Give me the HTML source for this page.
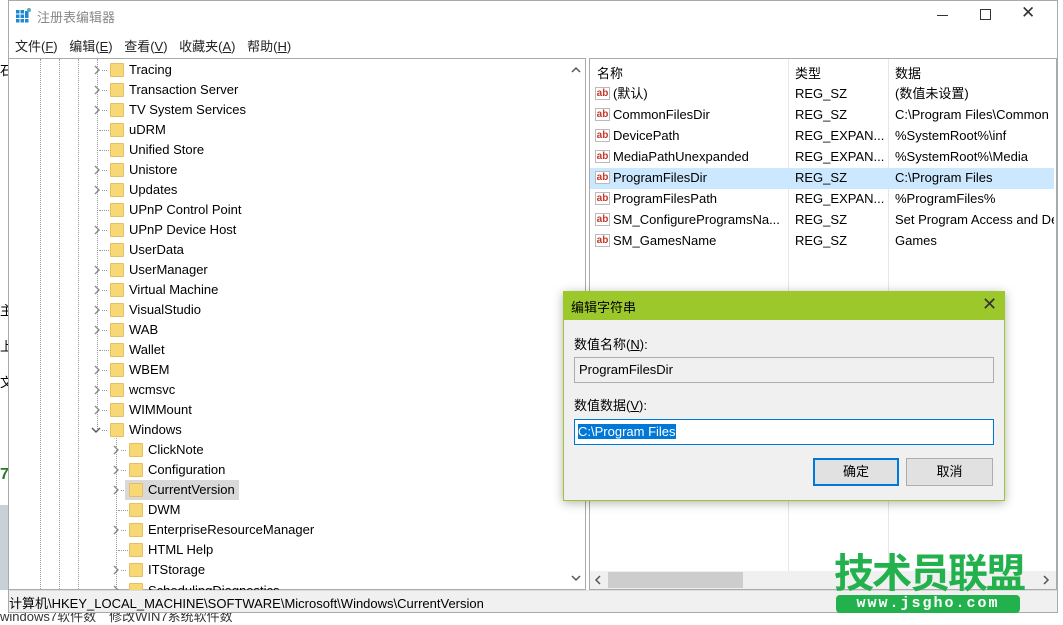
<!DOCTYPE html>
<html><head><meta charset="utf-8"><style>
*{margin:0;padding:0;box-sizing:border-box}
body{width:1063px;height:620px;overflow:hidden;background:#fff;font-family:"Liberation Sans","Noto Sans CJK SC",sans-serif;font-size:13px;color:#000;position:relative}
.abs{position:absolute}
.win{left:8px;top:0;width:1050px;height:613px;background:#fff;border:1px solid #aaa}
.row{position:absolute;height:20px;line-height:20px;white-space:nowrap}
.fold{position:absolute;width:14px;height:14px;background:#f8d775;border:1px solid #e6c060;border-radius:1px;top:3px}
.chev{position:absolute;width:10px;height:10px}
.dl{position:absolute;border-left:1px dotted #999}
.dh{position:absolute;border-top:1px dotted #999;width:8px;top:10px}
.rr{position:absolute;height:21px;line-height:21px;white-space:nowrap;left:590px;width:464px}
.ab{position:absolute;left:5px;top:4px;width:15px;height:13px;border:1px solid #bbb;color:#c0392b;font-size:10px;font-weight:bold;line-height:11px;text-align:center;background:#fff}
</style></head><body>
<div class="abs" style="left:0;top:60px;font-size:13px">石</div>
<div class="abs" style="left:0;top:300px">主</div>
<div class="abs" style="left:0;top:336px">上</div>
<div class="abs" style="left:0;top:372px">文</div>
<div class="abs" style="left:0;top:466px;color:#2a7a2a;font-weight:bold;font-size:16px">7</div>
<div class="abs" style="left:0;top:505px;width:8px;height:85px;background:#c8d0d8"></div>
<div class="abs" style="left:0;top:606px;font-size:13px;color:#333">windows7软件数　修改WIN7系统软件数</div>
<div class="abs win"></div>
<div class="abs" style="left:16px;top:8px;width:14px;height:14px">
<svg width="15" height="15"><g fill="#1e88d0"><rect x="0" y="2" width="3.5" height="3.5"/><rect x="4.5" y="2" width="3.5" height="3.5"/><rect x="9" y="3" width="3.5" height="3.5"/><rect x="0" y="6.5" width="3.5" height="3.5"/><rect x="4.5" y="6.5" width="3.5" height="3.5"/><rect x="9" y="6.5" width="3.5" height="3.5"/><rect x="0" y="11" width="3.5" height="3.5"/><rect x="4.5" y="11" width="3.5" height="3.5"/><rect x="9" y="11" width="3.5" height="3.5"/></g><circle cx="13" cy="2" r="2" fill="#5ab"/></svg></div>
<div class="abs" style="left:37px;top:7px;color:#888;font-size:13px">注册表编辑器</div>
<div class="abs" style="left:937px;top:15px;width:11px;border-top:1px solid #333"></div>
<div class="abs" style="left:980px;top:9px;width:11px;height:11px;border:1px solid #333"></div>
<div class="abs" style="left:1021px;top:3px;font-size:17px;color:#333">✕</div>
<div class="abs" style="left:15px;top:36px;color:#222;word-spacing:8px">文件(<u>F</u>) 编辑(<u>E</u>) 查看(<u>V</u>) 收藏夹(<u>A</u>) 帮助(<u>H</u>)</div>
<div class="abs" style="left:9px;top:58px;width:577px;height:532px;border:1px solid #aaa;border-left:none;overflow:hidden">
<div class="dl" style="left:31px;top:0;height:532px"></div>
<div class="dl" style="left:50px;top:0;height:532px"></div>
<div class="dl" style="left:69px;top:0;height:532px"></div>
<div class="dl" style="left:88px;top:0;height:372px"></div>
<div class="dl" style="left:107px;top:372px;height:160px"></div>
</div>
<div class="abs" style="left:567px;top:59px;width:18px;height:530px;background:#fff"></div>
<svg class="abs" style="left:571px;top:66px" width="10" height="8"><path d="M1 6L5 2L9 6" stroke="#555" stroke-width="1.5" fill="none"/></svg>
<svg class="abs" style="left:571px;top:574px" width="10" height="8"><path d="M1 2L5 6L9 2" stroke="#555" stroke-width="1.5" fill="none"/></svg>
<div id="rows"></div>
<div class="abs" style="left:589px;top:58px;width:468px;height:532px;border:1px solid #aaa"></div>
<div class="abs" style="left:788px;top:59px;height:512px;border-left:1px solid #e6e6e6"></div>
<div class="abs" style="left:888px;top:59px;height:512px;border-left:1px solid #e6e6e6"></div>
<div class="abs" style="left:597px;top:63px">名称</div>
<div class="abs" style="left:795px;top:63px">类型</div>
<div class="abs" style="left:895px;top:63px">数据</div>
<div class="abs" style="left:590px;top:168px;width:464px;height:21px;background:#cce8ff"></div>
<div id="rr"></div>
<div class="abs" style="left:590px;top:571px;width:466px;height:18px;background:#f0f0f0"></div>
<div class="abs" style="left:608px;top:572px;width:135px;height:16px;background:#cdcdcd"></div>
<svg class="abs" style="left:594px;top:575px" width="8" height="10"><path d="M6 1L2 5L6 9" stroke="#555" stroke-width="1.5" fill="none"/></svg>
<svg class="abs" style="left:1042px;top:575px" width="8" height="10"><path d="M2 1L6 5L2 9" stroke="#555" stroke-width="1.5" fill="none"/></svg>
<div class="abs" style="left:9px;top:590px;width:1048px;height:22px;background:#f0f0f0;border-top:1px solid #ddd"></div>
<div class="abs" style="left:9px;top:593px;font-size:13px">计算机\HKEY_LOCAL_MACHINE\SOFTWARE\Microsoft\Windows\CurrentVersion</div>
<div class="abs" style="left:834px;top:548px;font-size:40px;font-weight:bold;color:#22b14c;letter-spacing:-2px;line-height:44px;font-family:'Noto Sans CJK SC',sans-serif">技术员联盟</div>
<div class="abs" style="left:836px;top:595px;width:184px;height:18px;background:#22b14c;border-radius:4px;color:#fff;font-size:15px;font-weight:bold;text-align:center;line-height:18px;letter-spacing:2px;font-family:'Liberation Mono',monospace">www.jsgho.com</div>
<div class="abs" style="left:563px;top:291px;width:442px;height:210px;background:#f0f0f0;border:1px solid #9dc42a;box-shadow:0 2px 10px rgba(0,0,0,.3)"></div>
<div class="abs" style="left:563px;top:291px;width:442px;height:29px;background:#9dc82b"></div>
<div class="abs" style="left:571px;top:297px;font-size:13px">编辑字符串</div>
<div class="abs" style="left:982px;top:294px;font-size:18px;color:#333">✕</div>
<div class="abs" style="left:574px;top:334px">数值名称(<u>N</u>):</div>
<div class="abs" style="left:574px;top:357px;width:420px;height:26px;background:#f0f0f0;border:1px solid #adadad;padding:3px 4px;line-height:18px">ProgramFilesDir</div>
<div class="abs" style="left:574px;top:395px">数值数据(<u>V</u>):</div>
<div class="abs" style="left:574px;top:419px;width:420px;height:26px;background:#fff;border:1px solid #0078d7;padding:3px 3px;line-height:18px"><span style="background:#0078d7;color:#fff">C:\Program Files</span></div>
<div class="abs" style="left:813px;top:458px;width:86px;height:28px;background:#e1e1e1;border:2px solid #0078d7;text-align:center;line-height:24px">确定</div>
<div class="abs" style="left:906px;top:458px;width:87px;height:28px;background:#e1e1e1;border:1px solid #adadad;text-align:center;line-height:26px">取消</div>
<script>
var t=[["Tracing",1,1],["Transaction Server",1,1],["TV System Services",1,1],["uDRM",1,0],["Unified Store",1,0],["Unistore",1,1],["Updates",1,1],["UPnP Control Point",1,0],["UPnP Device Host",1,1],["UserData",1,0],["UserManager",1,1],["Virtual Machine",1,1],["VisualStudio",1,1],["WAB",1,1],["Wallet",1,0],["WBEM",1,1],["wcmsvc",1,1],["WIMMount",1,1],["Windows",1,2],["ClickNote",2,1],["Configuration",2,1],["CurrentVersion",2,1],["DWM",2,0],["EnterpriseResourceManager",2,1],["HTML Help",2,0],["ITStorage",2,1],["SchedulingDiagnostics",2,1]];
var h="";t.forEach(function(r,i){var y=60+i*20,o=r[1]==1?0:19;
if(r[2]==1)h+='<svg class="chev" style="left:'+(92+o)+'px;top:'+(y+5)+'px" width="10" height="10"><path d="M3 1L7 5L3 9" stroke="#8a8a8a" stroke-width="1.4" fill="none"/></svg>';
if(r[2]==2)h+='<svg class="chev" style="left:'+(91+o)+'px;top:'+(y+5)+'px" width="10" height="10"><path d="M1 3L5 7L9 3" stroke="#555" stroke-width="1.4" fill="none"/></svg>';
h+='<div class="dh" style="left:'+(r[2]?102+o:99+o)+'px;top:'+(y+10)+'px;width:'+(r[2]?5:10)+'px"></div>';
if(i==21)h+='<div class="abs" style="left:125px;top:'+y+'px;width:114px;height:20px;background:#d9d9d9"></div>';
h+='<div class="fold" style="left:'+(110+o)+'px;top:'+(y+3)+'px;height:'+(i==26?10:14)+'px"></div>';
h+='<div class="row" style="left:'+(129+o)+'px;top:'+y+'px;'+(i==26?'height:11px;overflow:hidden;line-height:22px':'')+'">'+r[0]+'</div>';});
document.getElementById("rows").innerHTML=h;
var d=[["(默认)","REG_SZ","(数值未设置)"],["CommonFilesDir","REG_SZ","C:\\Program Files\\Common"],["DevicePath","REG_EXPAN...","%SystemRoot%\\inf"],["MediaPathUnexpanded","REG_EXPAN...","%SystemRoot%\\Media"],["ProgramFilesDir","REG_SZ","C:\\Program Files"],["ProgramFilesPath","REG_EXPAN...","%ProgramFiles%"],["SM_ConfigureProgramsNa...","REG_SZ","Set Program Access and De"],["SM_GamesName","REG_SZ","Games"]];
h="";d.forEach(function(r,i){var y=83+i*21;h+='<div class="rr" style="top:'+y+'px;overflow:hidden"><div class="ab">ab</div><span class="abs" style="left:23px">'+r[0]+'</span><span class="abs" style="left:205px">'+r[1]+'</span><span class="abs" style="left:305px">'+r[2]+'</span></div>';});
document.getElementById("rr").innerHTML=h;
</script>
</body></html>
